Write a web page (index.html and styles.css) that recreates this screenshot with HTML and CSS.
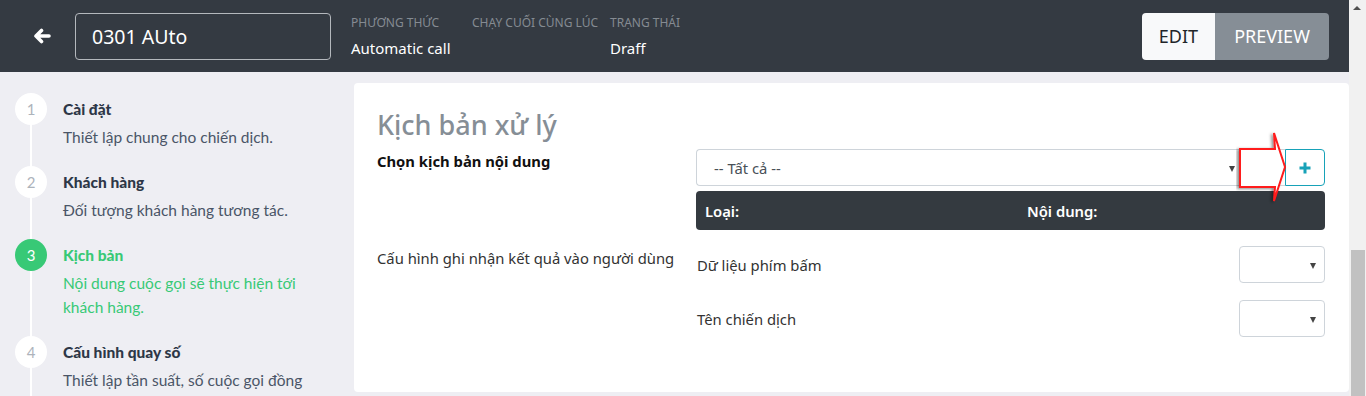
FILE: index.html
```html
<!DOCTYPE html>
<html lang="vi">
<head>
    <meta charset="UTF-8">
    <meta name="viewport" content="width=device-width, initial-scale=1.0">
    <title>Kịch bản xử lý</title>
    <link rel="stylesheet" href="styles.css">
</head>
<body>
    <div class="page">
        <header class="topbar">
            <a class="back" href="#">
                <svg width="18" height="16" viewBox="0 0 18 16"><path d="M16 8H3M8.5 2.5L3 8l5.5 5.5" fill="none" stroke="#fff" stroke-width="3.6" stroke-linecap="round" stroke-linejoin="round"/></svg>
            </a>
            <input class="name-input" type="text" value="0301 AUto">
            <div class="meta">
                <div class="meta-item meta-type">
                    <div class="meta-label">Phương thức</div>
                    <div class="meta-value">Automatic call</div>
                </div>
                <div class="meta-item meta-last">
                    <div class="meta-label">Chạy cuối cùng lúc</div>
                    <div class="meta-value"></div>
                </div>
                <div class="meta-item">
                    <div class="meta-label">Trạng thái</div>
                    <div class="meta-value">Draff</div>
                </div>
            </div>
            <div class="mode-switch">
                <button class="mode mode-edit">EDIT</button>
                <button class="mode mode-preview">PREVIEW</button>
            </div>
        </header>

        <div class="content">
            <ul class="steps">
                <li class="step">
                    <div class="step-head"><span class="step-num">1</span><span class="step-title">Cài đặt</span></div>
                    <div class="step-desc">Thiết lập chung cho chiến dịch.</div>
                </li>
                <li class="step">
                    <div class="step-head"><span class="step-num">2</span><span class="step-title">Khách hàng</span></div>
                    <div class="step-desc">Đối tượng khách hàng tương tác.</div>
                </li>
                <li class="step active">
                    <div class="step-head"><span class="step-num">3</span><span class="step-title">Kịch bản</span></div>
                    <div class="step-desc">Nội dung cuộc gọi sẽ thực hiện tới khách hàng.</div>
                </li>
                <li class="step">
                    <div class="step-head"><span class="step-num">4</span><span class="step-title">Cấu hình quay số</span></div>
                    <div class="step-desc">Thiết lập tần suất, số cuộc gọi đồng</div>
                </li>
            </ul>

            <section class="card">
                <h2 class="card-title">Kịch bản xử lý</h2>

                <div class="form-row">
                    <div class="form-label bold">Chọn kịch bản nội dung</div>
                    <div class="form-control">
                        <div class="select-group">
                            <div class="select wide">-- Tất cả --</div>
                            <button class="add-btn">
                                <svg width="12" height="12" viewBox="0 0 12 12"><path d="M6 0.5v11M0.5 6h11" stroke="#17a2b8" stroke-width="3"/></svg>
                            </button>
                            <svg class="pointer" width="52" height="76" viewBox="0 0 52 76">
                                <defs>
                                    <filter id="shadow" x="-30%" y="-30%" width="160%" height="160%">
                                        <feDropShadow dx="-2" dy="1" stdDeviation="1.6" flood-color="#000" flood-opacity="0.45"/>
                                    </filter>
                                </defs>
                                <polygon points="4,20 39,20 38,4 49,38 38,72 39,58 4,58" fill="#fff" stroke="#ff1a1a" stroke-width="2" filter="url(#shadow)"/>
                            </svg>
                        </div>
                        <div class="info-bar">
                            <span class="info-type">Loại:</span>
                            <span class="info-content">Nội dung:</span>
                        </div>
                    </div>
                </div>

                <div class="form-row second">
                    <div class="form-label">Cấu hình ghi nhận kết quả vào người dùng</div>
                    <div class="form-control">
                        <div class="map-row">
                            <span>Dữ liệu phím bấm</span>
                            <div class="select small"></div>
                        </div>
                        <div class="map-row">
                            <span>Tên chiến dịch</span>
                            <div class="select small"></div>
                        </div>
                    </div>
                </div>
            </section>
        </div>
    </div>

    <div class="scrollbar">
        <div class="scroll-up"></div>
        <div class="scroll-track"><div class="scroll-thumb"></div></div>
    </div>
</body>
</html>
```

FILE: styles.css
```css
html, body {
    margin: 0;
    padding: 0;
    height: 100%;
    overflow: hidden;
}

body {
    display: flex;
    background-color: #eeeef3;
    font-family: "Noto Sans", "Open Sans", Arial, sans-serif;
    color: #212529;
}

.page {
    flex: 1;
    min-width: 0;
    display: flex;
    flex-direction: column;
}

/* top bar */
.topbar {
    height: 72px;
    flex-shrink: 0;
    background-color: #343a42;
    display: flex;
    align-items: center;
    padding: 0 20px 0 33px;
}

.back {
    display: flex;
    width: 18px;
    margin-right: 24px;
}

.name-input {
    width: 256px;
    height: 47px;
    box-sizing: border-box;
    background: transparent;
    border: 1px solid #b4b8bd;
    border-radius: 4px;
    color: #fff;
    font-family: inherit;
    font-size: 19.5px;
    padding: 0 16px;
    margin-right: 20px;
    outline: none;
}

.meta {
    display: flex;
    flex: 1;
}

.meta-item {
    display: flex;
    flex-direction: column;
    gap: 5px;
}

.meta-type { width: 121px; }
.meta-last { width: 138px; }

.meta-label {
    font-size: 12px;
    color: #858b92;
    text-transform: uppercase;
    line-height: 18px;
}

.meta-value {
    font-size: 15px;
    color: #fff;
    line-height: 22px;
    min-height: 22px;
}

.mode-switch {
    display: flex;
    height: 47px;
    border-radius: 4px;
    overflow: hidden;
}

.mode {
    border: none;
    font-family: inherit;
    font-size: 18px;
    padding: 0;
    cursor: pointer;
}

.mode-edit {
    width: 73px;
    background-color: #f8f9fa;
    color: #212529;
}

.mode-preview {
    width: 114px;
    background-color: #868e96;
    color: #fff;
}

/* steps */
.content {
    flex: 1;
    display: flex;
    align-items: flex-start;
}

.steps {
    list-style: none;
    margin: 0;
    padding: 21px 0 0 15px;
    width: 339px;
    flex-shrink: 0;
    font-family: Lato, "Noto Sans", sans-serif;
}

.step {
    position: relative;
    padding-bottom: 17px;
}

.step::before {
    content: "";
    position: absolute;
    left: 15px;
    top: 0;
    bottom: 0;
    width: 2px;
    background-color: #fff;
}

.step-head {
    display: flex;
    align-items: center;
    gap: 16px;
    height: 32px;
    position: relative;
}

.step-num {
    width: 32px;
    height: 32px;
    border-radius: 50%;
    background-color: #fff;
    color: #adb3bb;
    font-size: 15px;
    display: flex;
    align-items: center;
    justify-content: center;
}

.step-title {
    font-size: 15.5px;
    font-weight: 900;
    color: #2d3747;
}

.step-desc {
    margin-left: 48px;
    width: 265px;
    font-size: 15.5px;
    line-height: 24px;
    color: #4a5567;
}

.step.active .step-num {
    background-color: #38c976;
    color: #fff;
}

.step.active .step-title,
.step.active .step-desc {
    color: #38c976;
}

/* card */
.card {
    flex: 1;
    margin-top: 11px;
    background-color: #fff;
    border-radius: 4px;
    padding: 24px 24px 38px 23px;
}

.card-title {
    margin: 0 0 6px;
    font-size: 27px;
    font-weight: 500;
    color: #868e96;
    line-height: 36px;
}

.form-row {
    display: flex;
    align-items: flex-start;
}

.form-row.second {
    margin-top: 16px;
}

.form-label {
    width: 319px;
    flex-shrink: 0;
    font-size: 14.8px;
    line-height: 22px;
    color: #333;
    padding-top: 1px;
}

.form-label.bold {
    font-weight: bold;
    color: #111;
}

.form-control {
    flex: 1;
}

.select-group {
    display: flex;
    position: relative;
}

.select {
    box-sizing: border-box;
    height: 37px;
    border: 1px solid #ced4da;
    border-radius: 4px;
    position: relative;
    font-size: 14.8px;
    color: #495057;
    display: flex;
    align-items: center;
}

.select::after {
    content: "";
    position: absolute;
    right: 8px;
    top: 16px;
    border-left: 3.5px solid transparent;
    border-right: 3.5px solid transparent;
    border-top: 6px solid #444;
}

.select.wide {
    flex: 1;
    padding-left: 17px;
    border-radius: 4px 0 0 4px;
    border-right: none;
}

.select.wide::after {
    right: 50px;
}

.add-btn {
    width: 40px;
    height: 37px;
    box-sizing: border-box;
    border: 1px solid #17a2b8;
    border-radius: 0 4px 4px 0;
    background: #fff;
    padding: 0;
    display: flex;
    align-items: center;
    justify-content: center;
}

.pointer {
    position: absolute;
    right: 37px;
    top: -20px;
}

.info-bar {
    margin-top: 5px;
    height: 39px;
    background-color: #343a40;
    border-radius: 4px;
    display: flex;
    align-items: center;
    color: #fff;
    font-size: 14.8px;
    font-weight: 600;
    padding-left: 9px;
}

.info-type {
    width: 322px;
}

.map-row {
    display: flex;
    justify-content: space-between;
    align-items: center;
    font-size: 14.8px;
    color: #333;
    padding-left: 1px;
    margin-bottom: 17px;
}

.select.small {
    width: 86px;
}

/* fake scrollbar */
.scrollbar {
    width: 17px;
    flex-shrink: 0;
    background-color: #f1f1f1;
    display: flex;
    flex-direction: column;
}

.scroll-up {
    height: 17px;
    position: relative;
}

.scroll-up::after {
    content: "";
    position: absolute;
    left: 4px;
    top: 6px;
    border-left: 4px solid transparent;
    border-right: 4px solid transparent;
    border-bottom: 4px solid #505050;
}

.scroll-track {
    flex: 1;
    padding-top: 233px;
    display: flex;
}

.scroll-thumb {
    flex: 1;
    margin: 0 1px 0 2px;
    background-color: #c1c1c1;
}
```
